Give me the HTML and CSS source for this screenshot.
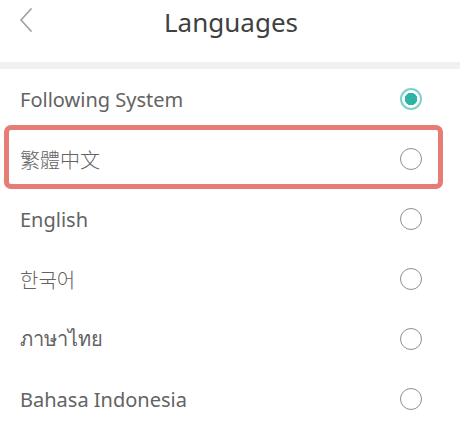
FILE: index.html
```html
<!DOCTYPE html>
<html lang="en">
<head>
    <meta charset="UTF-8">
    <meta name="viewport" content="width=device-width, initial-scale=1.0">
    <title>Languages</title>
    <link rel="stylesheet" href="styles.css">
</head>
<body>

    <header class="top-bar">
        <span class="back">
            <svg width="14" height="26" viewBox="0 0 14 26">
                <path d="M12 2 L2 13 L12 24" fill="none" stroke="#a3a3a3" stroke-width="1.8" stroke-linecap="round" stroke-linejoin="round"/>
            </svg>
        </span>
        <h1 class="title">Languages</h1>
    </header>

    <div class="divider"></div>

    <ul class="lang-list">
        <li class="lang-row">
            <span class="lang-name">Following System</span>
            <span class="radio checked"></span>
        </li>
        <li class="lang-row highlighted">
            <span class="lang-name cjk" lang="zh-Hant">繁體中文</span>
            <span class="radio"></span>
            <span class="mark"></span>
        </li>
        <li class="lang-row">
            <span class="lang-name">English</span>
            <span class="radio"></span>
        </li>
        <li class="lang-row">
            <span class="lang-name cjk" lang="ko">한국어</span>
            <span class="radio"></span>
        </li>
        <li class="lang-row">
            <span class="lang-name thai" lang="th">ภาษาไทย</span>
            <span class="radio"></span>
        </li>
        <li class="lang-row">
            <span class="lang-name">Bahasa Indonesia</span>
            <span class="radio"></span>
        </li>
    </ul>

</body>
</html>
```

FILE: styles.css
```css
body {
    margin: 0;
    background-color: #FFFFFF;
    font-family: 'Noto Sans', 'Noto Sans CJK TC', sans-serif;
    color: #636363;
    width: 460px;
    overflow: hidden;
}

.top-bar {
    height: 62px;
    display: flex;
    align-items: flex-start;
    justify-content: center;
    position: relative;
}

.back {
    position: absolute;
    left: 19px;
    top: 7px;
}

.title {
    margin: 0;
    height: 44px;
    line-height: 44px;
    font-size: 26px;
    font-weight: 400;
    color: #404040;
    padding-left: 2px;
}

.divider {
    height: 7px;
    background-color: #f1f1f1;
}

.lang-list {
    list-style: none;
    margin: 0;
    padding: 0;
}

.lang-row {
    height: 60px;
    display: flex;
    align-items: center;
    justify-content: space-between;
    padding: 0 38px 0 20px;
    position: relative;
}

.lang-name {
    font-size: 20px;
}

.lang-name.cjk {
    font-family: 'Noto Sans CJK TC', 'Noto Sans CJK KR', sans-serif;
    font-weight: 300;
}

.lang-name.thai {
    font-weight: 300;
}

.radio {
    width: 22px;
    height: 22px;
    box-sizing: border-box;
    border: 1.5px solid #8f8f8f;
    border-radius: 50%;
}

.radio.checked {
    border: 2px solid #7dd2c8;
    background: radial-gradient(circle, #2fb3a4 0 6px, #FFFFFF 6.5px);
}

.mark {
    position: absolute;
    top: -4px;
    bottom: 0;
    left: 4px;
    right: 17px;
    border: 5px solid #e77c77;
    border-radius: 7px;
    box-sizing: border-box;
}
```
